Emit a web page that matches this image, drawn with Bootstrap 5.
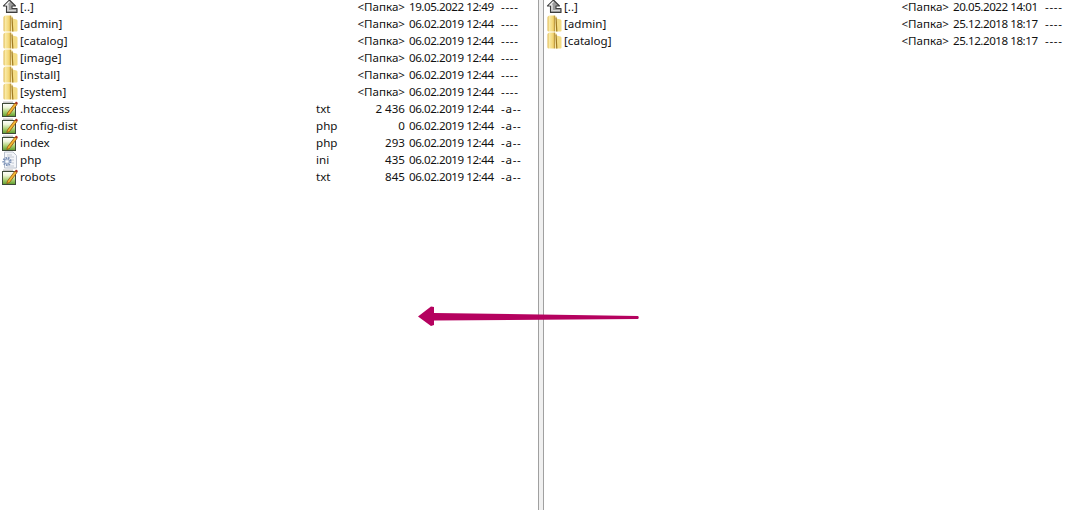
<!DOCTYPE html>
<html lang="en">
<head>
  <meta charset="UTF-8">
  <title>Total Commander panels</title>
  <link href="https://cdn.jsdelivr.net/npm/bootstrap@5.3.3/dist/css/bootstrap.min.css" rel="stylesheet">
  <style>
    body {
      height: 510px;
      overflow: hidden;
      background: #fff;
      color: #111;
      font-family: "Noto Sans", "Open Sans", sans-serif;
      font-size: 11.6px;
    }
    .pane-left { width: 538px; }
    .pane-right { width: 538px; }
    .splitter {
      width: 6px;
      height: 510px;
      background: #f0f0f0;
      border-left: 1px solid #a0a0a0;
      border-right: 1px solid #a0a0a0;
    }
    .file-list { margin-top: -2px; }
    .file-row { height: 17px; line-height: 17px; white-space: nowrap; }
    .file-icon { width: 20px; height: 17px; padding-left: 1px; }
    .file-icon svg { display: block; }
    .col-name { width: 296px; }
    .col-ext { width: 40px; }
    .col-size { width: 49px; text-align: right; }
    .col-date { width: 92px; margin-left: 4px; letter-spacing: -.46px; }
    .col-attr { letter-spacing: .7px; }
    .arrow-over { position: absolute; left: 410px; top: 300px; }
  </style>
</head>
<body class="position-relative">
  <svg width="0" height="0" class="position-absolute">
    <defs>
      <linearGradient id="folderFill" x1="0" x2="1" y1="0" y2="0">
        <stop offset="0" stop-color="#e0b84e"/>
        <stop offset=".2" stop-color="#f9eaa6"/>
        <stop offset=".62" stop-color="#f2d36e"/>
        <stop offset=".72" stop-color="#b08628"/>
        <stop offset=".8" stop-color="#fbf0b8"/>
        <stop offset="1" stop-color="#e3bd58"/>
      </linearGradient>
      <linearGradient id="sheetFill" x1="0" x2="0" y1="0" y2="1">
        <stop offset="0" stop-color="#fff"/>
        <stop offset=".3" stop-color="#eef5d8"/>
        <stop offset=".65" stop-color="#a9d070"/>
        <stop offset="1" stop-color="#5b9a2c"/>
      </linearGradient>
      <symbol id="ico-up" viewBox="0 0 18 18">
        <path d="M8.500 2 2.500 8H5.500V14.500H16V10.500H11V8H14.500Z" fill="#9b9b9b" stroke="#3d3d3d" stroke-width="1.100" stroke-linejoin="round"/>
        <path d="M8.500 3.500 5 7H7V13" fill="none" stroke="#f2f2f2" stroke-width="1.200"/>
        <path d="M8 12.500H15" fill="none" stroke="#d5d5d5" stroke-width="1"/>
      </symbol>
      <symbol id="ico-folder" viewBox="0 0 18 18">
        <path d="M2.500 2.500C2.500 1.500 3.500 .5 4.500 .5H10C11 .5 11.500 1.500 11.500 2.500L12 16.500H4C3 16.500 2.500 16 2.500 15Z" fill="url(#folderFill)"/>
        <path d="M11.500 3.500 15.500 4.500C16.200 4.800 16.500 5.300 16.500 6V15.500C16.500 16.300 16 16.500 15.300 16.500H12Z" fill="#f3dc85"/>
        <path d="M11 2.500 11.800 16.500" fill="none" stroke="#a07b22" stroke-width="1.200"/>
      </symbol>
      <symbol id="ico-text" viewBox="0 0 18 18">
        <rect x="1.500" y="3.500" width="13" height="13" fill="url(#sheetFill)" stroke="#3e4a38"/>
        <path d="M3 3V1.500M5 3V1.500M7 3V1.500M9 3V1.500M11 3V1.500" stroke="#8b8b8b" stroke-width="1"/>
        <path d="M6.500 13 14 3 16 4.500 8.500 14.500 5.800 15.500Z" fill="#f2b632" stroke="#96530f" stroke-width=".8"/>
        <path d="M14 3 15 1.500 17 3 16 4.500Z" fill="#a82a1a"/>
      </symbol>
      <symbol id="ico-ini" viewBox="0 0 18 18">
        <path d="M3.500 1H12L15.500 4.500V17H3.500Z" fill="#f4f6fa" stroke="#b9c0cc"/>
        <path d="M6 4H11M6 6H13M10 9H13M11 12H13M6 15H13" stroke="#c2c8d2" stroke-width="1"/>
        <circle cx="6" cy="10.500" r="3.600" fill="none" stroke="#7d93b8" stroke-width="2" stroke-dasharray="1.500 1"/>
        <circle cx="6" cy="10.500" r="2.600" fill="#d5deec" stroke="#7d93b8" stroke-width=".8"/>
        <circle cx="6" cy="10.500" r="1" fill="#fff"/>
      </symbol>
    </defs>
  </svg>

  <div class="d-flex">
    <div class="pane-left flex-shrink-0">
      <div class="file-list" id="leftList"></div>
    </div>
    <div class="splitter flex-shrink-0"></div>
    <div class="pane-right flex-shrink-0">
      <div class="file-list" id="rightList"></div>
    </div>
  </div>

  <svg class="arrow-over" width="235" height="32" viewBox="410 300 235 32">
    <path d="M638 316 C639 317 639 318 638 319 L434 320.500 L434 325 L431 326 L418 316.500 L431 306.500 L434 307 L434 313 Z" fill="#b5025f"/>
  </svg>

  <script>
    const FOLDER = '<Папка>';
    const leftFiles = [
      ['up', '[..]', '', FOLDER, '19.05.2022 12:49', '----'],
      ['folder', '[admin]', '', FOLDER, '06.02.2019 12:44', '----'],
      ['folder', '[catalog]', '', FOLDER, '06.02.2019 12:44', '----'],
      ['folder', '[image]', '', FOLDER, '06.02.2019 12:44', '----'],
      ['folder', '[install]', '', FOLDER, '06.02.2019 12:44', '----'],
      ['folder', '[system]', '', FOLDER, '06.02.2019 12:44', '----'],
      ['text', '.htaccess', 'txt', '2 436', '06.02.2019 12:44', '-a--'],
      ['text', 'config-dist', 'php', '0', '06.02.2019 12:44', '-a--'],
      ['text', 'index', 'php', '293', '06.02.2019 12:44', '-a--'],
      ['ini', 'php', 'ini', '435', '06.02.2019 12:44', '-a--'],
      ['text', 'robots', 'txt', '845', '06.02.2019 12:44', '-a--']
    ];
    const rightFiles = [
      ['up', '[..]', '', FOLDER, '20.05.2022 14:01', '----'],
      ['folder', '[admin]', '', FOLDER, '25.12.2018 18:17', '----'],
      ['folder', '[catalog]', '', FOLDER, '25.12.2018 18:17', '----']
    ];

    function fillList(id, files) {
      const list = document.getElementById(id);
      files.forEach(f => {
        const row = document.createElement('div');
        row.className = 'file-row d-flex';
        row.innerHTML = `
          <div class="file-icon"><svg width="18" height="18"><use href="#ico-${f[0]}" width="18" height="18"/></svg></div>
          <div class="col-name"></div>
          <div class="col-ext">${f[2]}</div>
          <div class="col-size"></div>
          <div class="col-date">${f[4]}</div>
          <div class="col-attr">${f[5]}</div>`;
        row.querySelector('.col-name').textContent = f[1];
        row.querySelector('.col-size').textContent = f[3];
        list.appendChild(row);
      });
    }

    fillList('leftList', leftFiles);
    fillList('rightList', rightFiles);
  </script>
  <script src="https://cdn.jsdelivr.net/npm/bootstrap@5.3.3/dist/js/bootstrap.bundle.min.js"></script>
</body>
</html>
